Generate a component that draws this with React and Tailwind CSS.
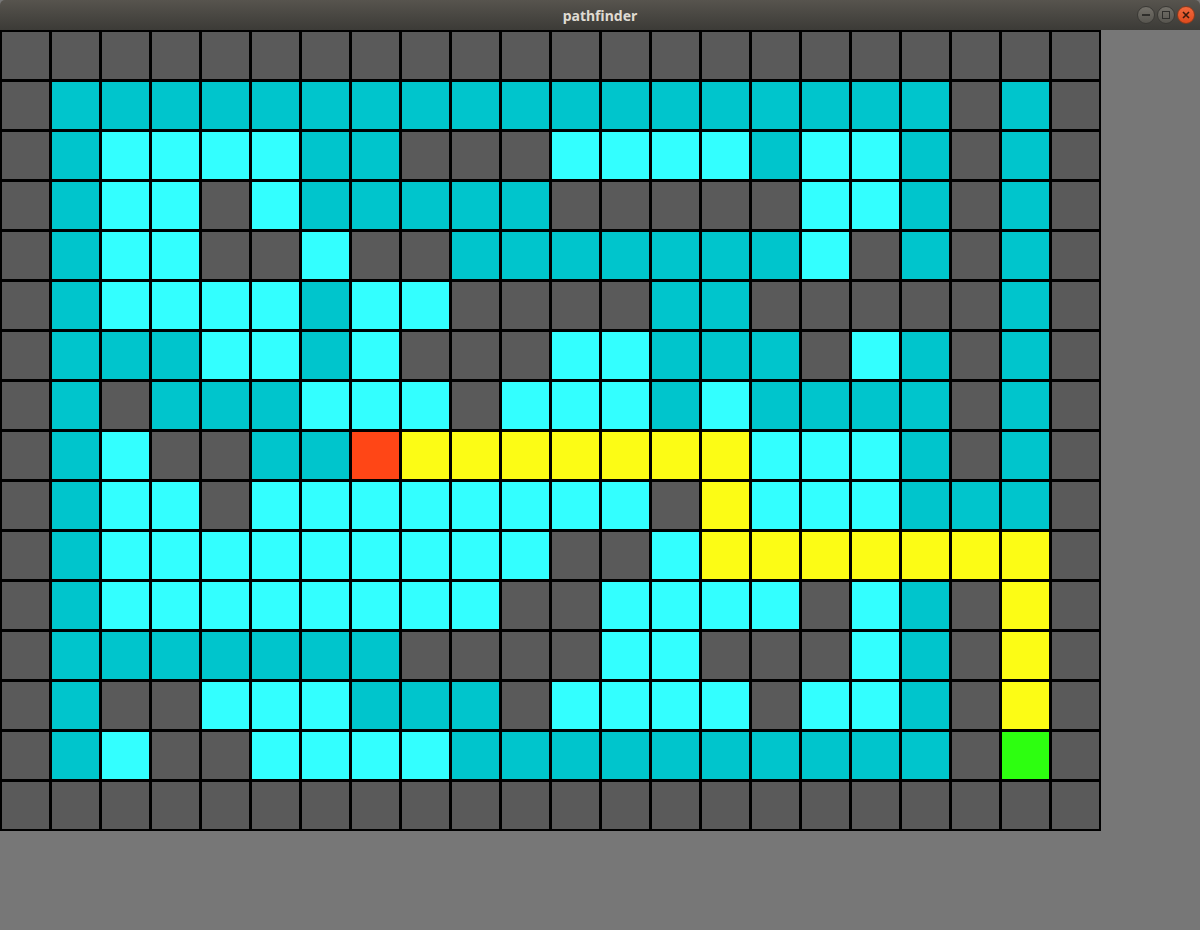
import React from 'react';

// W wall, D visited, L open set, Y path, S start, E end
const rows = [
    'WWWWWWWWWWWWWWWWWWWWWW',
    'WDDDDDDDDDDDDDDDDDDWDW',
    'WDLLLLDDWWWLLLLDLLDWDW',
    'WDLLWLDDDDDWWWWWLLDWDW',
    'WDLLWWLWWDDDDDDDLWDWDW',
    'WDLLLLDLLWWWWDDWWWWWDW',
    'WDDDLLDLWWWLLDDDWLDWDW',
    'WDWDDDLLLWLLLDLDDDDWDW',
    'WDLWWDDSYYYYYYYLLLDWDW',
    'WDLLWLLLLLLLLWYLLLDDDW',
    'WDLLLLLLLLLWWLYYYYYYYW',
    'WDLLLLLLLLWWLLLLWLDWYW',
    'WDDDDDDDWWWWLLWWWLDWYW',
    'WDWWLLLDDDWLLLLWLLDWYW',
    'WDLWWLLLLDDDDDDDDDDWEW',
    'WWWWWWWWWWWWWWWWWWWWWW',
];

const cellClass = {
    W: 'bg-[#5a5a5a]',
    D: 'bg-[#00c5cc]',
    L: 'bg-[#33ffff]',
    Y: 'bg-[#fcfc15]',
    S: 'bg-[#ff4616]',
    E: 'bg-[#2dff10]',
};

const TitleBar = () => (
    <div className="relative flex h-[30px] items-center justify-center rounded-t-[5px] bg-gradient-to-b from-[#57544e] to-[#3c3b37]">
        <span
            className="text-[14px] font-bold text-[#dfdbd2]"
            style={{ fontFamily: '"Noto Sans", "DejaVu Sans", sans-serif' }}
        >
            pathfinder
        </span>
        <div className="absolute right-[5px] top-[6px] flex gap-[2px]">
            <div className="flex h-[18px] w-[18px] items-center justify-center rounded-full border border-[#3a3935] bg-gradient-to-b from-[#737069] to-[#57554f]">
                <div className="h-[1.5px] w-[8px] bg-[#2f2e2b]" />
            </div>
            <div className="flex h-[18px] w-[18px] items-center justify-center rounded-full border border-[#3a3935] bg-gradient-to-b from-[#737069] to-[#57554f]">
                <div className="h-[8px] w-[8px] border-[1.5px] border-[#2f2e2b]" />
            </div>
            <div className="flex h-[18px] w-[18px] items-center justify-center rounded-full border border-[#8a3a1c] bg-gradient-to-b from-[#f0683c] to-[#df4a1c]">
                <svg width="8" height="8" viewBox="0 0 8 8">
                    <path d="M1 1 L7 7 M7 1 L1 7" stroke="#3b1b0e" strokeWidth="1.6" />
                </svg>
            </div>
        </div>
    </div>
);

const App = () => {
    return (
        <div className="h-[930px] w-[1200px] overflow-hidden bg-[#777777]">
            <TitleBar />
            <div className="w-[1101px] bg-black p-[2px]">
                <div className="grid grid-cols-[repeat(22,47px)] gap-[3px]">
                    {rows.map((row, r) =>
                        row.split('').map((c, i) => (
                            <div key={`${r}-${i}`} className={`h-[47px] w-[47px] ${cellClass[c]}`} />
                        ))
                    )}
                </div>
            </div>
        </div>
    );
};

export default App;
